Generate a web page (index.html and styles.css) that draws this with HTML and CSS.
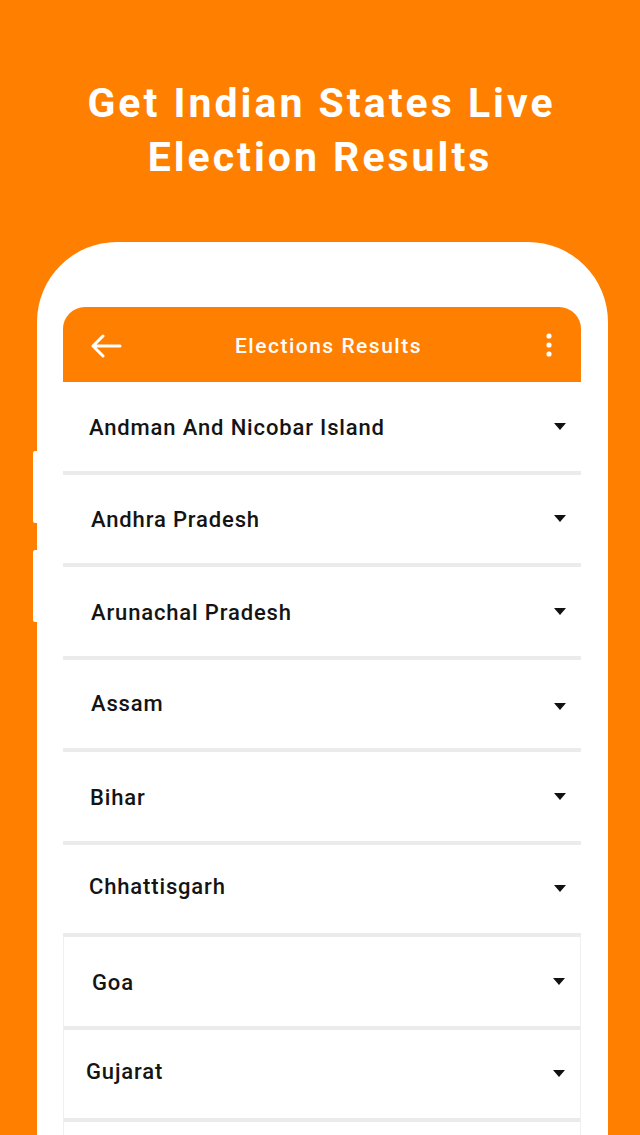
FILE: index.html
```html
<!DOCTYPE html>
<html>
<head>
<meta charset="utf-8">
<link rel="stylesheet" href="styles.css">
</head>
<body>
<div class="page">
  <h1 class="headline">Get Indian States Live<br>Election Results</h1>
  <div class="phone">
    <div class="screen">
      <div class="appbar">
        <svg class="back" width="32" height="24" viewBox="0 0 32 24"><path d="M30 12H3M13 2L3 12l10 10" fill="none" stroke="#fff" stroke-width="3" stroke-linecap="round" stroke-linejoin="round"/></svg>
        <div class="appbar-title">Elections Results</div>
        <svg class="more" width="8" height="26" viewBox="0 0 8 26"><circle cx="4" cy="4" r="2.6" fill="#fff"/><circle cx="4" cy="13" r="2.6" fill="#fff"/><circle cx="4" cy="22" r="2.6" fill="#fff"/></svg>
      </div>
      <ul class="list">
        <li class="row"><span class="name n1">Andman And Nicobar Island</span><span class="caret"></span></li>
        <li class="row"><span class="name n2">Andhra Pradesh</span><span class="caret"></span></li>
        <li class="row"><span class="name n2">Arunachal Pradesh</span><span class="caret"></span></li>
        <li class="row"><span class="name n2 up">Assam</span><span class="caret low"></span></li>
        <li class="row"><span class="name n3">Bihar</span><span class="caret"></span></li>
        <li class="row"><span class="name n1 up2">Chhattisgarh</span><span class="caret"></span></li>
        <li class="row boxed"><span class="name n4">Goa</span><span class="caret"></span></li>
        <li class="row boxed"><span class="name n5 up2">Gujarat</span><span class="caret"></span></li>
        <li class="row boxed"></li>
      </ul>
    </div>
  </div>
</div>
</body>
</html>
```
FILE: styles.css
```css
html, body {
  margin: 0;
  padding: 0;
  background: #ff7f00;
  height: 1135px;
  overflow: hidden;
}
.page {
  font-family: Roboto, "Noto Sans", sans-serif;
  display: flex;
  flex-direction: column;
  padding-top: 76px;
}
.headline {
  margin: 0;
  text-align: center;
  color: #fff;
  font-size: 41px;
  font-weight: 700;
  line-height: 54px;
  letter-spacing: 3px;
  text-indent: 3px;
}
.phone {
  position: relative;
  margin-top: 58px;
  margin-left: 37px;
  width: 571px;
  height: 1000px;
  background: #fff;
  border-radius: 80px 80px 0 0;
  box-sizing: border-box;
  padding: 65px 27px 0 26px;
}
.phone::before,
.phone::after {
  content: "";
  position: absolute;
  left: -4px;
  width: 4px;
  height: 72px;
  background: #fff;
  border-radius: 2px 0 0 2px;
}
.phone::before { top: 209px; }
.phone::after { top: 308px; }
.screen {
  display: flex;
  flex-direction: column;
}
.appbar {
  height: 75px;
  background: #ff7f00;
  border-radius: 22px 22px 0 0;
  display: flex;
  align-items: center;
  padding: 0 28px 0 27px;
  color: #fff;
}
.back { flex: none; margin-top: 2px; }
.appbar-title {
  flex: 1;
  text-align: center;
  font-size: 21px;
  font-weight: 500;
  letter-spacing: 1.5px;
  padding-right: 10px;
  margin-top: 2px;
}
.more { flex: none; margin-top: 1px; }
.list {
  list-style: none;
  margin: 0;
  padding: 0;
}
.row {
  height: 88.5px;
  border-bottom: 4px solid #ebebeb;
  display: flex;
  align-items: center;
  justify-content: space-between;
  padding: 0 15px 0 26px;
}
.row.boxed {
  border-left: 1px solid #f0f0f0;
  border-right: 1px solid #f0f0f0;
}
.name {
  font-size: 22px;
  font-weight: 500;
  color: #141414;
  letter-spacing: 0.85px;
  margin-top: 2px;
}
.name.up { margin-top: 0; }
.name.up2 { margin-top: 0; margin-bottom: 5px; }
.n1 { margin-left: 0; }
.n2 { margin-left: 2px; }
.n3 { margin-left: 1px; }
.n4 { margin-left: 2px; }
.n5 { margin-left: -4px; }
.caret {
  width: 0;
  height: 0;
  border-left: 6.5px solid transparent;
  border-right: 6.5px solid transparent;
  border-top: 7px solid #111;
}
.caret.low { margin-top: 6px; }
```
